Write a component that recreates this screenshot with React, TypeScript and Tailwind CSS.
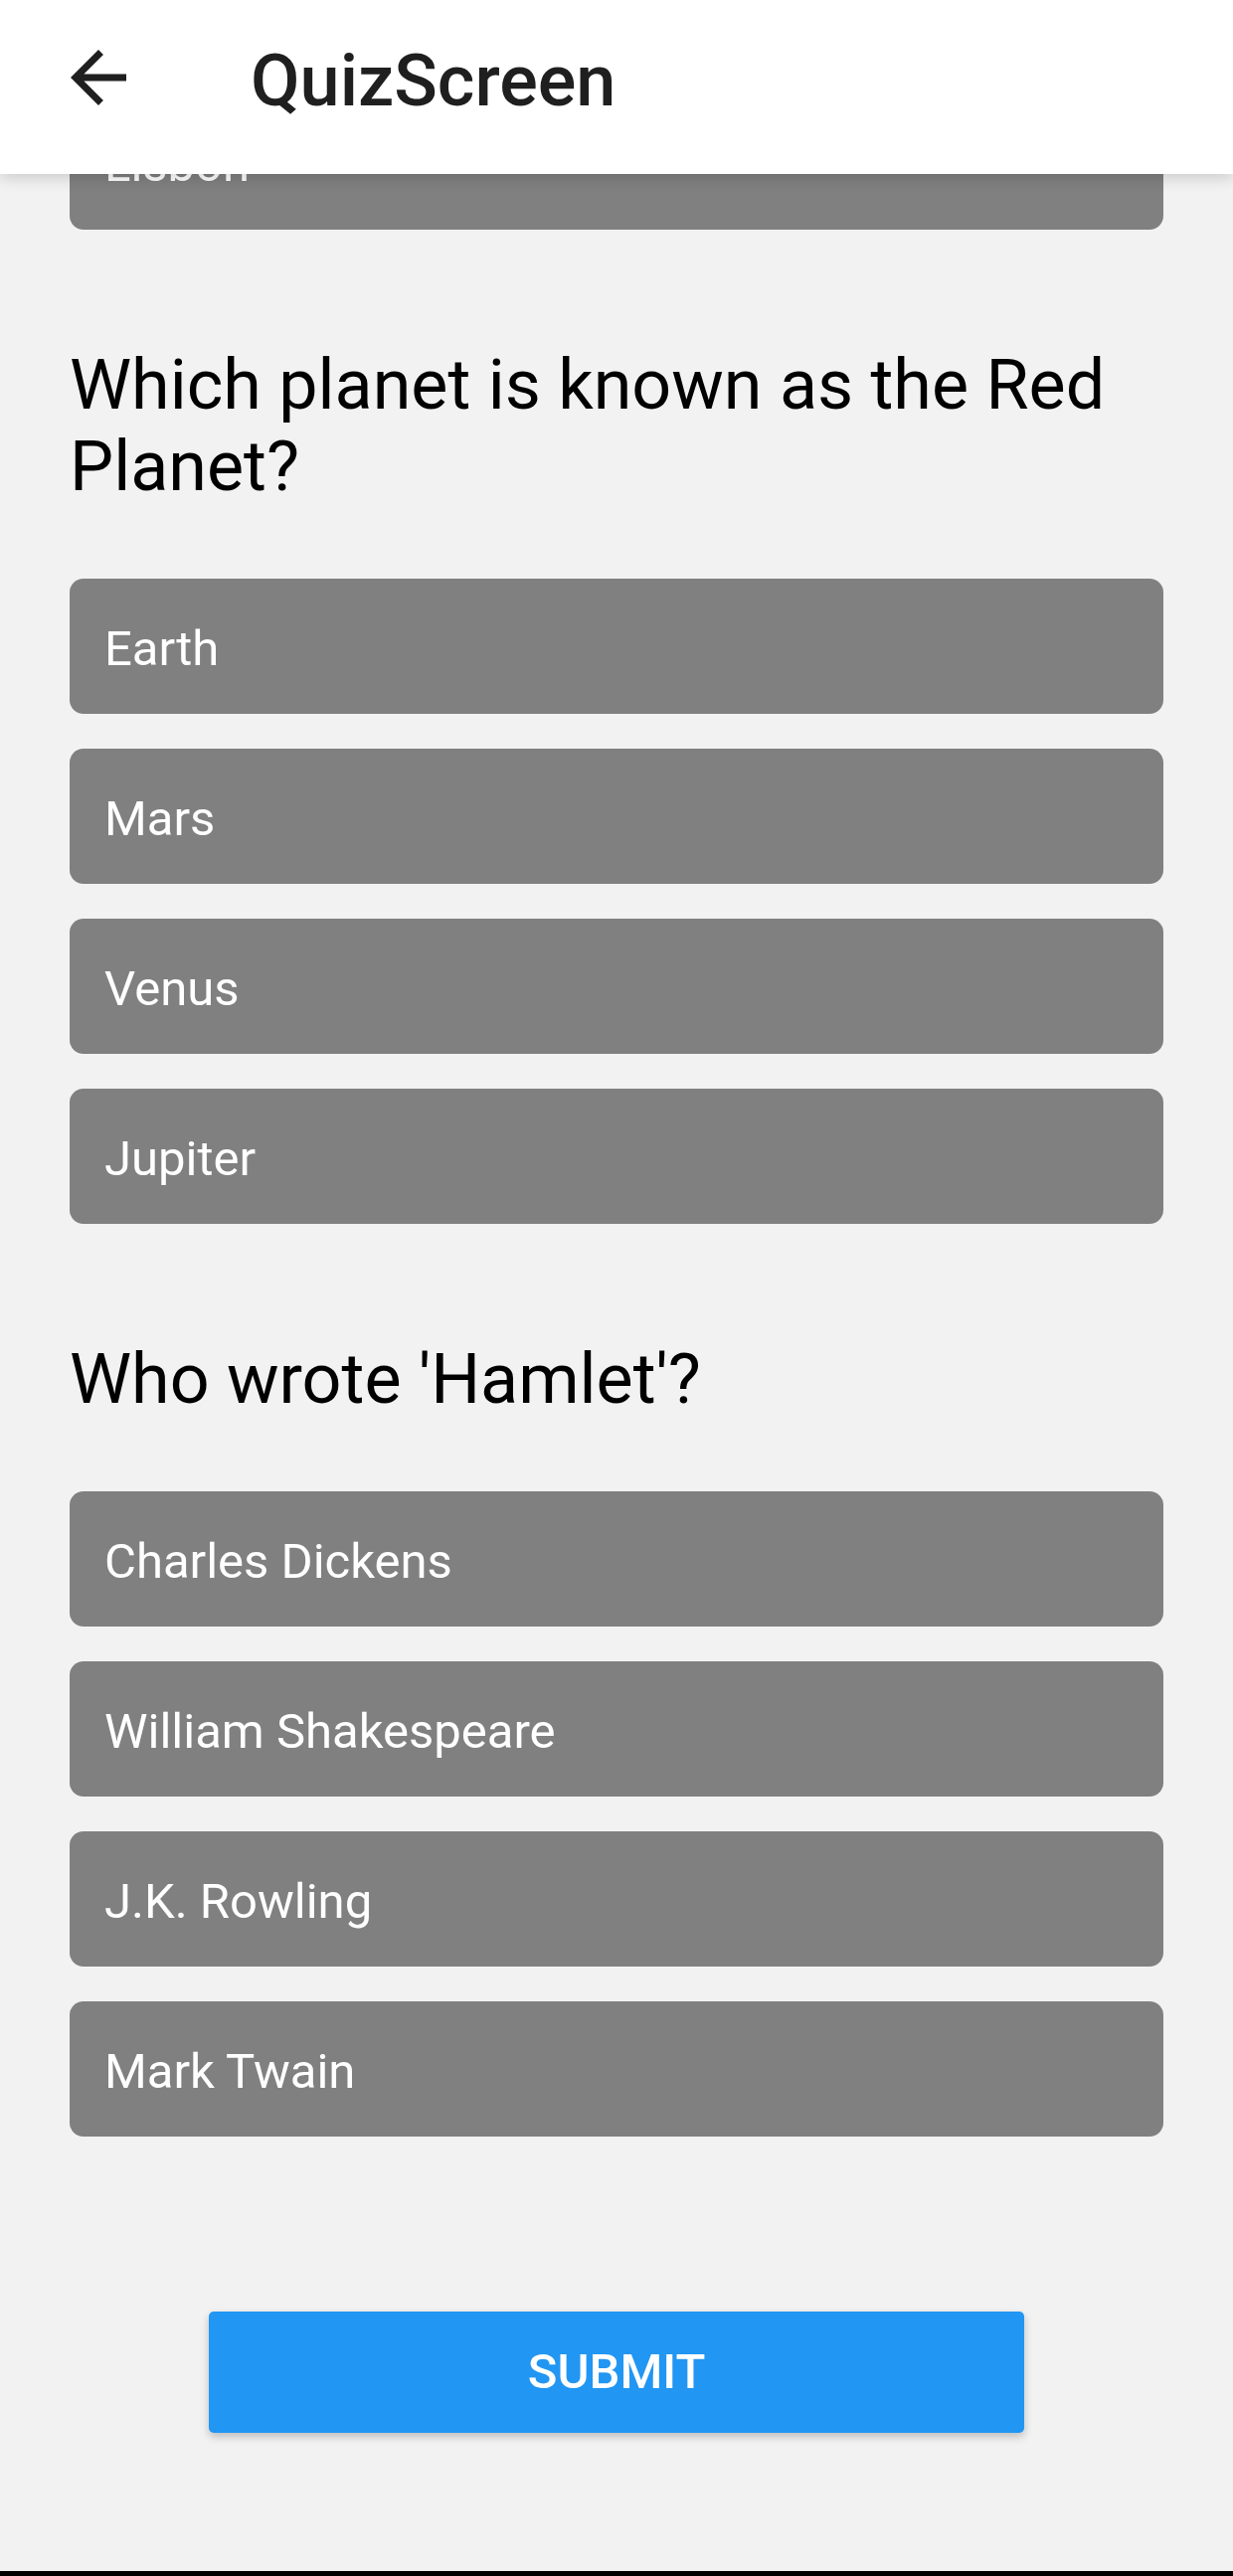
import { useState } from 'react'

type Question = {
  text: string
  options: string[]
}

const questions: Question[] = [
  {
    text: 'Which planet is known as the Red Planet?',
    options: ['Earth', 'Mars', 'Venus', 'Jupiter'],
  },
  {
    text: "Who wrote 'Hamlet'?",
    options: ['Charles Dickens', 'William Shakespeare', 'J.K. Rowling', 'Mark Twain'],
  },
]

function OptionButton({ label, onClick }: { label: string; onClick?: () => void }) {
  return (
    <button
      onClick={onClick}
      className="flex h-[136px] w-full items-center rounded-[14px] bg-[#808080] pl-[35px] pt-[4px] text-left text-[49px] leading-[57px] text-white"
    >
      {label}
    </button>
  )
}

export default function App() {
  const [answers, setAnswers] = useState<Record<number, string>>({})

  return (
    <div className="flex min-h-[2591px] w-[1240px] flex-col bg-[#f2f2f2] font-[family-name:Roboto,sans-serif]">
      {/* Toolbar */}
      <header className="relative z-10 flex h-[175px] items-start bg-white shadow-[0_4px_14px_rgba(0,0,0,0.16)]">
        <button className="ml-[57px] mt-[36px] h-[84px] w-[84px] text-[#1f1f1f]" aria-label="Back">
          <svg viewBox="0 0 24 24" className="h-full w-full" fill="currentColor">
            <path d="M20 11H7.83l5.59-5.59L12 4l-8 8 8 8 1.41-1.41L7.83 13H20v-2z" />
          </svg>
        </button>
        <h1 className="ml-[111px] mt-[40px] text-[72px] font-medium leading-[83px] text-[#1f1f1f]">
          QuizScreen
        </h1>
      </header>

      {/* Scrolled content */}
      <main className="-mt-[80px] flex flex-col px-[70px]">
        {/* tail of the previous question */}
        <OptionButton label="Lisbon" />

        {questions.map((q, qi) => (
          <section key={qi} className="flex flex-col">
            <h2 className="mt-[115px] text-[70px] leading-[82px] text-black">{q.text}</h2>
            <div className="mt-[72px] flex flex-col gap-[35px]">
              {q.options.map((opt) => (
                <OptionButton
                  key={opt}
                  label={opt}
                  onClick={() => setAnswers({ ...answers, [qi]: opt })}
                />
              ))}
            </div>
          </section>
        ))}

        <div className="mt-[176px] flex justify-center">
          <button className="h-[122px] w-[820px] rounded-[5px] bg-[#2196f3] text-[49px] font-medium text-white shadow-[0_4px_8px_rgba(0,0,0,0.22)]">
            SUBMIT
          </button>
        </div>
      </main>

      <div className="mt-auto h-[5px] bg-black" />
    </div>
  )
}
